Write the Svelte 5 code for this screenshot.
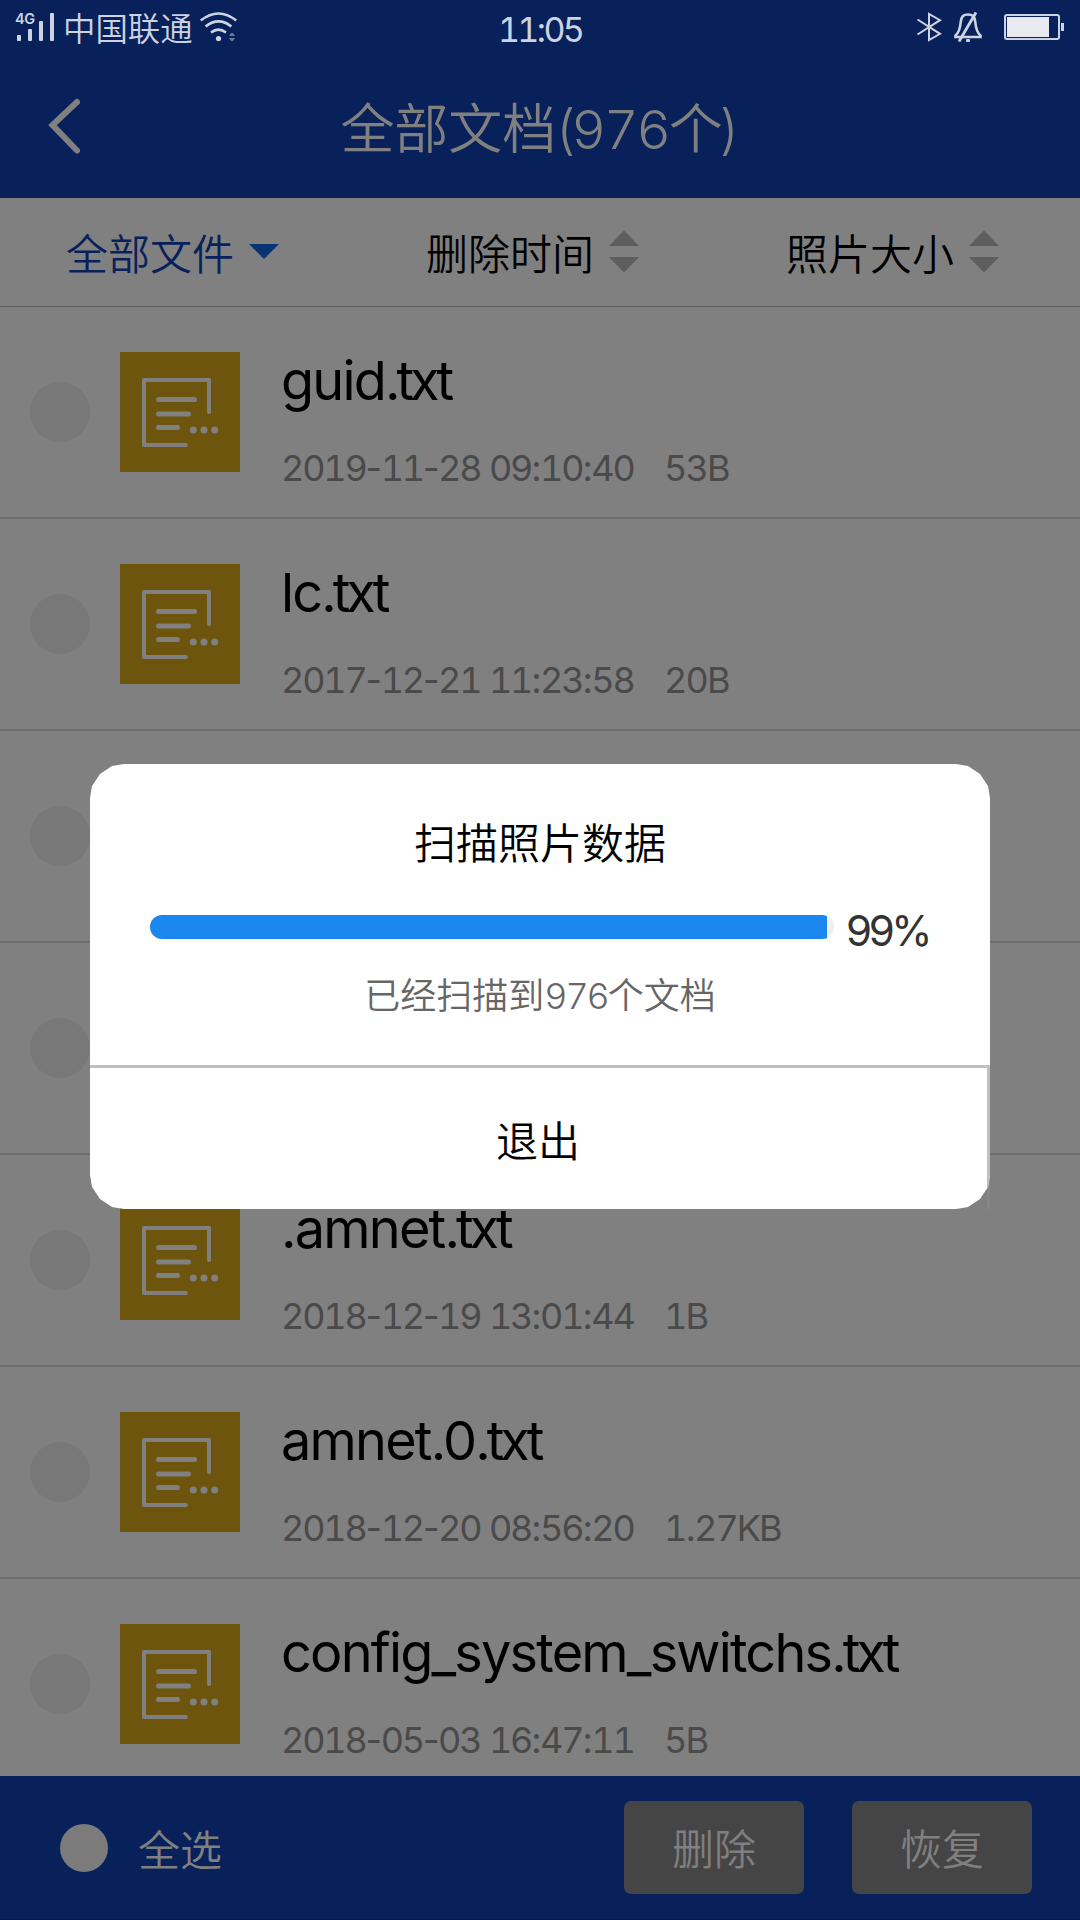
<script>
  const files = [
    { name: 'guid', ext: '.txt', date: '2019-11-28 09:10:40', size: '53B' },
    { name: 'lc', ext: '.txt', date: '2017-12-21 11:23:58', size: '20B' },
    { name: '', ext: '', date: '', size: '' },
    { name: '', ext: '', date: '', size: '' },
    { name: '.amnet', ext: '.txt', date: '2018-12-19 13:01:44', size: '1B' },
    { name: 'amnet.0', ext: '.txt', date: '2018-12-20 08:56:20', size: '1.27KB' },
    { name: 'config_system_switchs', ext: '.txt', date: '2018-05-03 16:47:11', size: '5B' }
  ];
  const progress = 99;

  // Digit groups are tabular, separators keep their proportional width.
  const groups = (text) => text.split(/(\D+)/).filter(Boolean);
</script>

{#snippet digits(text)}{#each groups(text) as part}<span class:num={/\d/.test(part)} class:sep={!/\d/.test(part)}>{part}</span>{/each}{/snippet}

<div class="screen">
  <header>
    <div class="status">
      <div class="side">
        <div class="signal">
          <span class="net">4G</span>
          <svg width="40" height="48" viewBox="16 0 40 48" fill="#cdd3e0">
            <rect x="17" y="35" width="4" height="6" rx="1" />
            <rect x="28" y="29" width="4" height="12" rx="1" />
            <rect x="39" y="21" width="4" height="20" rx="1" />
            <rect x="50" y="13" width="4" height="28" rx="1" />
          </svg>
        </div>
        <span class="carrier">中国联通</span>
        <svg width="40" height="48" viewBox="199 0 40 48" fill="none" stroke="#cdd3e0" stroke-width="2.6">
          <path d="M200.8 20.5Q218.5 6.5 236.2 20.5M205.6 26.5Q218.5 16.2 231.4 26.5M211 32.5Q218.5 26.6 226 32.5" />
          <circle cx="218.5" cy="38.5" r="2.6" fill="#cdd3e0" stroke="none" />
          <path d="M229 36l2-3h2l2 3zM229 38h6l-2 3h-2z" fill="#6a7799" stroke="none" />
        </svg>
      </div>
      <span class="time">{@render digits('11:05')}</span>
      <div class="side end">
        <svg width="164" height="48" viewBox="916 0 164 48" fill="none" stroke="#cdd3e0" stroke-width="2">
          <path d="M917.5 19.5L940 33.8 929 40V14l11 6.2L917.5 34.5" />
          <path d="M955.5 37H980.5V35.5C977 32.5 975.8 28 975.3 22C974.5 16 972.5 14.5 968 14.5C963.5 14.5 961.5 16 960.7 22C960.2 28 959 32.5 955.5 35.5Z" stroke-width="2.6" />
          <path d="M959 41.5L976 12.5" stroke-width="2.8" />
          <rect x="966" y="39" width="4" height="3" rx="1" fill="#cdd3e0" stroke="none" />
          <rect x="1005" y="15" width="54" height="24" rx="2" />
          <path d="M1007 17h42v20h-42z" fill="#e9eaef" stroke="none" />
          <path d="M1061 23h3v8h-3z" fill="#cdd3e0" stroke="none" />
        </svg>
      </div>
    </div>
    <div class="titlebar">
      <svg class="back" width="40" height="60" viewBox="44 96 40 60" fill="none" stroke="#808080" stroke-width="6" stroke-linecap="round">
        <path d="M77 102L52.5 125L77 150.5" />
      </svg>
      <h1>全部文档<span class="open">(</span><span class="num">976</span>个<span class="close">)</span></h1>
    </div>
  </header>

  <nav>
    <div class="tab active">
      全部文件
      <svg width="30" height="44" viewBox="0 0 30 44"><path d="M0 14h30L15 29z" fill="#083474" /></svg>
    </div>
    {#each ['删除时间', '照片大小'] as label}
      <div class="tab">
        {label}
        <svg width="30" height="44" viewBox="0 0 30 44" fill="#5e5e5e"><path d="M0 16h30L15 .5zM0 27h30L15 42.5z" /></svg>
      </div>
    {/each}
  </nav>

  <main>
    {#each files as file}
      <div class="row">
        <i class="check"></i>
        <svg class="doc" width="120" height="120" viewBox="0 0 120 120" fill="none" stroke="#808080" stroke-linecap="round" stroke-linejoin="round">
          <path d="M0 0h120v120H0z" fill="#6e550e" stroke="none" />
          <path d="M89 60V28H24V93H66" stroke-width="4" />
          <path d="M38.5 47.5H74.5M38.5 62H68.5M38.5 75.5H57.5" stroke-width="5" />
          <g fill="#808080" stroke="none"><circle cx="73.3" cy="78" r="3.5" /><circle cx="84" cy="78" r="3.5" /><circle cx="94.7" cy="78" r="3.5" /></g>
        </svg>
        <div class="info">
          <div class="name">{file.name}<span>{file.ext}</span></div>
          <div class="meta"><span class="date">{@render digits(file.date)}</span><span>{@render digits(file.size)}</span></div>
        </div>
      </div>
    {/each}
  </main>

  <footer>
    <i class="all"></i>
    <span class="label">全选</span>
    <button>删除</button>
    <button>恢复</button>
  </footer>

  <div class="modal">
    <div class="card">
      <h2>扫描照片数据</h2>
      <div class="progress">
        <div class="track"><div class="fill" style="width: {progress}%"></div></div>
        <span class="pct">{progress}%</span>
      </div>
      <p>已经扫描到<span class="num">976</span>个文档</p>
      <div class="exit">退出</div>
    </div>
  </div>
</div>

<style>
  :global(body) { margin: 0; background: #808080; }
  .screen {
    position: relative;
    display: flex;
    flex-direction: column;
    width: 1080px;
    height: 1920px;
    overflow: hidden;
    background: #808080;
    font-family: Inter, "Noto Sans CJK SC", sans-serif;
    font-weight: 350;
    color: #000;
  }
  svg { display: block; flex: none; }
  .num { font-variant-numeric: tabular-nums; }
  header { height: 198px; flex: none; background: #08215b; }
  .status { display: flex; height: 48px; color: #cdd3e0; }
  .side { display: flex; flex: 1; }
  .end { justify-content: flex-end; }
  .signal { position: relative; margin: 0 7px 0 16px; }
  .net { position: absolute; left: -1px; top: 9px; font: 600 14.5px/20px Inter, sans-serif; letter-spacing: -.3px; }
  .carrier { width: 136px; font-size: 32.4px; line-height: 59px; white-space: nowrap; }
  .time { width: 84px; text-align: center; font-size: 34px; line-height: 60px; font-weight: 400; letter-spacing: -2.8px; }
  .titlebar { display: flex; align-items: center; height: 150px; padding-left: 44px; }
  .back { margin-top: 6px; }
  h1 { flex: 1; margin: 13px 85px 0 0; text-align: center; font-size: 54px; font-weight: 350; line-height: 70px; color: #808080; }
  h1 .num { letter-spacing: -2.4px; }
  .open { letter-spacing: -4px; }
  .close { margin-left: -3px; }
  nav { display: flex; height: 108px; flex: none; border-bottom: 1px solid #5e5e5e; }
  .tab { display: flex; align-items: center; gap: 15px; width: 294px; padding: 5px 0 0 66px; font-size: 42px; line-height: 60px; }
  .tab svg { margin-top: -6px; }
  .active { color: #08215b; }
  main { flex: 1; min-height: 0; overflow: hidden; }
  .row { display: flex; align-items: center; height: 210px; padding-left: 30px; border-bottom: 2px solid #6f6f6f; }
  .check { width: 60px; height: 60px; margin-right: 30px; border-radius: 50%; background: #787878; }
  .info { padding-left: 41px; height: 170px; white-space: nowrap; }
  .name { height: 101px; font-size: 54px; line-height: 107px; font-weight: 400; letter-spacing: -1.8px; }
  .name span { letter-spacing: -4.1px; }
  .meta { display: flex; font-size: 36px; line-height: 80px; font-weight: 400; color: #4a4a4a; letter-spacing: -1.9px; white-space: pre; }
  .date { width: 383px; }
  .date .num { letter-spacing: -2.2px; }
  .date .sep { letter-spacing: -1.5px; }
  footer { display: flex; align-items: center; flex: none; box-sizing: border-box; height: 144px; padding: 0 48px 0 60px; border-bottom: 1px solid #06194a; background: #08215b; color: #808080; font-size: 42px; }
  .all { width: 48px; height: 48px; border-radius: 50%; background: #7b7b7b; }
  .label { margin: 0 auto 0 30px; }
  button { width: 180px; height: 93px; margin-left: 48px; padding: 5px 0 0; border: 0; border-radius: 7px; background: #454545; color: #808080; font: inherit; line-height: 88px; }
  .modal { position: absolute; left: 90px; top: 764px; width: 900px; height: 445px; background: linear-gradient(#868686, #868686) right bottom / 3px 60px no-repeat; }
  .card {
    height: 445px;
    background: #fff;
    clip-path: polygon(0 34px, 2px 22px, 10px 10px, 22px 2px, 34px 0, 866px 0, 878px 2px, 890px 10px, 898px 22px, 900px 34px, 900px 411px, 898px 423px, 890px 435px, 878px 443px, 866px 445px, 34px 445px, 22px 443px, 10px 435px, 2px 423px, 0 411px);
  }
  h2 { margin: 0; padding-top: 50px; text-align: center; font-size: 42px; line-height: 60px; font-weight: 350; }
  .progress { display: flex; align-items: center; height: 24px; margin-top: 41px; padding-left: 60px; }
  .track { width: 684px; height: 24px; margin-right: 12px; overflow: hidden; border-radius: 12px; background: #f0f0f0; }
  .fill { height: 24px; background: #1a86ee; }
  .pct { padding-top: 8px; font-size: 42px; line-height: 50px; font-weight: 400; color: #333; letter-spacing: -3.4px; }
  p { height: 99px; margin: 0; padding-top: 27px; text-align: center; font-size: 36px; line-height: 60px; color: #666; }
  p .num { letter-spacing: -2.2px; }
  .exit { height: 141px; padding-right: 1px; border-top: 3px solid #c0c0c0; border-right: 3px solid #c0c0c0; text-align: center; font-size: 42px; line-height: 147px; }
</style>
